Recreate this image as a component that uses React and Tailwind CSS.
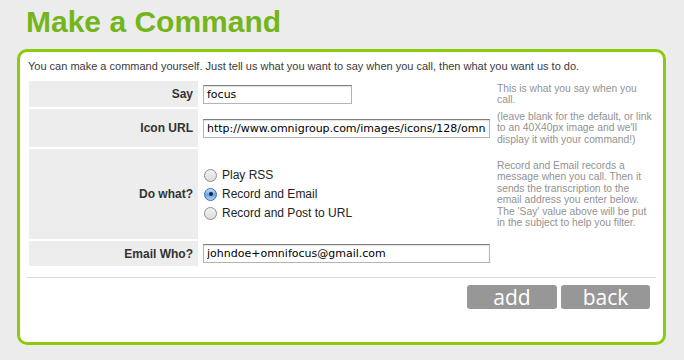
import React from 'react';

// Help copy shown in the right-hand column, one entry per form row.
const HELP = {
    say: "This is what you say when you call.",
    icon: "(leave blank for the default, or link to an 40X40px image and we'll display it with your command!)",
    action: "Record and Email records a message when you call. Then it sends the transcription to the email address you enter below. The 'Say' value above will be put in the subject to help you filter.",
};

const ACTIONS = [
    { id: 'rss', label: 'Play RSS' },
    { id: 'email', label: 'Record and Email' },
    { id: 'post', label: 'Record and Post to URL' },
];

const Label = ({ children }) => (
    <div className="flex items-center justify-end bg-[#ededed] pr-[5px] text-[12px] font-bold text-[#333]">
        {children}
    </div>
);

const Help = ({ children }) => (
    <div className="flex items-center pl-[2px]">
        <p className="w-[157px] text-[10.3px] leading-[11.5px] text-[#929292]">{children}</p>
    </div>
);

const TextInput = ({ value, width }) => (
    <input
        type="text"
        defaultValue={value}
        className={`${width} h-[19px] border border-[#b4b4b4] border-t-[#7d7d7d] bg-white px-[3px] font-['DejaVu_Sans',sans-serif] text-[11px] text-black shadow-[inset_0_1px_1px_rgba(0,0,0,0.12)] outline-none`}
    />
);

const Radio = ({ checked }) =>
    checked ? (
        <span className="flex h-[13px] w-[13px] items-center justify-center rounded-full border border-[#3f6fa8] bg-gradient-to-b from-[#cfe3f7] via-[#6aa6e3] to-[#a9d0f5]">
            <span className="h-[4px] w-[4px] rounded-full bg-[#14243a]" />
        </span>
    ) : (
        <span className="h-[13px] w-[13px] rounded-full border border-[#8d8d8d] bg-gradient-to-b from-[#f4f4f4] to-[#dcdcdc]" />
    );

const App = () => {
    const selected = 'email';

    return (
        <div className="min-h-[360px] w-[684px] bg-[#ececec] pt-[4px] font-['Liberation_Sans',Arial,sans-serif]">
            <h1 className="ml-[26px] text-[30px] font-bold leading-[36px] text-[#74b51c]">Make a Command</h1>

            <div className="ml-[17px] mt-[9px] h-[296px] w-[649px] rounded-[10px] border-[3px] border-[#8bca0e] bg-white px-[8px] pt-[7px]">
                <p className="text-[11px] leading-[14px] text-[#3a3a3a]">
                    You can make a command yourself. Just tell us what you want to say when you call, then what you want us to do.
                </p>

                {/* form table */}
                <div className="ml-[1px] mt-[8px] grid grid-cols-[169px_293px_159px] grid-rows-[26px_38px_90px_25px] gap-x-[2px] gap-y-[2px]">
                    <Label>Say</Label>
                    <div className="flex items-center pl-[3px]">
                        <TextInput value="focus" width="w-[149px]" />
                    </div>
                    <Help>{HELP.say}</Help>

                    <Label>Icon URL</Label>
                    <div className="flex items-center pl-[3px]">
                        <TextInput value="http://www.omnigroup.com/images/icons/128/omnifocus.png" width="w-[287px]" />
                    </div>
                    <Help>{HELP.icon}</Help>

                    <Label>Do what?</Label>
                    <div className="flex flex-col justify-center pl-[4px]">
                        {ACTIONS.map((a) => (
                            <label key={a.id} className="flex h-[19px] items-center gap-[5px] text-[12px] text-[#222]">
                                <Radio checked={a.id === selected} />
                                {a.label}
                            </label>
                        ))}
                    </div>
                    <Help>{HELP.action}</Help>

                    <Label>Email Who?</Label>
                    <div className="flex items-center pl-[3px]">
                        <TextInput value="johndoe+omnifocus@gmail.com" width="w-[287px]" />
                    </div>
                    <div />
                </div>

                <div className="-mx-[1px] mt-[11px] h-px bg-[#d6d6d6]" />

                {/* actions */}
                <div className="mr-[5px] mt-[7px] flex justify-end gap-[4px]">
                    <button className="h-[24px] w-[90px] rounded-[3px] bg-[#979797] font-['Open_Sans',sans-serif] text-[21px] leading-[24px] text-white">
                        add
                    </button>
                    <button className="h-[24px] w-[89px] rounded-[3px] bg-[#979797] font-['Open_Sans',sans-serif] text-[21px] leading-[24px] text-white">
                        back
                    </button>
                </div>
            </div>
        </div>
    );
};

export default App;
